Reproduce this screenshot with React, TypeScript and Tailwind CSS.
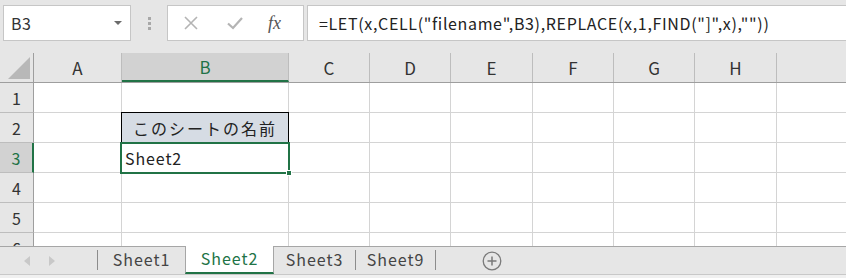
import React from "react";

const font = { fontFamily: '"Noto Sans CJK JP", "Noto Sans", sans-serif' };

const cols = [
  { l: "A", w: 88 },
  { l: "B", w: 167 },
  { l: "C", w: 81 },
  { l: "D", w: 81 },
  { l: "E", w: 82 },
  { l: "F", w: 81 },
  { l: "G", w: 81 },
  { l: "H", w: 82 },
  { l: "", w: 70 },
];

function Row({ n, h = 30 }: { n: string; h?: number }) {
  const sel = n === "3";
  return (
    <div className="flex shrink-0" style={{ height: h }}>
      <div
        className={
          "w-[34px] shrink-0 flex items-center justify-center text-[16px] border-b border-r " +
          (sel
            ? "bg-[#d2d2d2] text-[#217346] border-r-[#217346] border-r-2 border-b-[#bdbdbd]"
            : "bg-[#e6e6e6] text-[#333] border-b-[#bdbdbd] border-r-[#9e9e9e]")
        }
      >
        {n}
      </div>
      {cols.map((c, i) => {
        let content: React.ReactNode = null;
        let cls = "shrink-0 border-b border-r border-[#d4d4d4] bg-white";
        if (n === "2" && c.l === "B") {
          cls = "shrink-0 bg-[#d6dce4] border border-black -mt-px -ml-px flex items-center justify-center text-[16px] text-[#222] tracking-[2px]";
          content = "このシートの名前";
          return (
            <div key={i} className={cls} style={{ width: c.w + 1, height: h + 1 }}>
              {content}
            </div>
          );
        }
        if (n === "3" && c.l === "B") {
          content = <span className="pl-[3px] text-[16px] text-[#222] tracking-[0.9px]">Sheet2</span>;
          cls += " flex items-center";
        }
        return (
          <div key={i} className={cls} style={{ width: c.w }}>
            {content}
          </div>
        );
      })}
    </div>
  );
}

export default function App() {
  return (
    <div className="w-[846px] h-[278px] overflow-hidden bg-[#e6e6e6] flex flex-col relative" style={font}>
      {/* toolbar */}
      <div className="h-[53px] shrink-0 flex items-start pt-[5px] pl-[3px]">
        <div className="w-[128px] h-[36px] bg-white border border-[#c6c6c6] flex items-center justify-between pl-[7px] pr-[8px]">
          <span className="text-[16px] text-[#333] tracking-[0.5px]">B3</span>
          <svg width="8" height="5" viewBox="0 0 8 5"><path d="M0 0h8L4 4z" fill="#6b6b6b" /></svg>
        </div>
        <div className="w-[36px] h-[36px] flex flex-col items-center justify-center gap-[2px]">
          <div className="w-[3px] h-[3px] bg-[#a8a8a8]" />
          <div className="w-[3px] h-[3px] bg-[#a8a8a8]" />
          <div className="w-[3px] h-[3px] bg-[#a8a8a8]" />
        </div>
        <div className="w-[137px] h-[36px] bg-white border border-[#c6c6c6] flex items-center">
          <svg className="ml-[15px]" width="16" height="16" viewBox="0 0 16 16">
            <path d="M2 2L14 14M14 2L2 14" stroke="#b4b4b4" strokeWidth="1.6" />
          </svg>
          <svg className="ml-[27px]" width="18" height="16" viewBox="0 0 18 16">
            <path d="M2 8.5L7 13L16 3" stroke="#b4b4b4" strokeWidth="2.2" fill="none" />
          </svg>
          <span
            className="ml-[24px] text-[18px] italic text-[#555] leading-none"
            style={{ fontFamily: '"Liberation Serif", serif' }}
          >
            fx
          </span>
        </div>
        <div className="ml-[3px] flex-1 h-[36px] bg-white border border-[#c6c6c6] border-r-0 flex items-center pl-[11px]">
          <span className="text-[16px] text-[#222] whitespace-nowrap tracking-[0.65px]">=LET(x,CELL("filename",B3),REPLACE(x,1,FIND("]",x),""))</span>
        </div>
      </div>
      {/* column header */}
      <div className="h-[30px] shrink-0 flex border-b border-[#9e9e9e]">
        <div className="w-[34px] shrink-0 border-r border-[#9e9e9e] relative">
          <svg className="absolute right-[3px] bottom-[3px]" width="22" height="22" viewBox="0 0 22 22">
            <path d="M22 0V22H0z" fill="#b8b8b8" />
          </svg>
        </div>
        {cols.map((c, i) => (
          <div
            key={i}
            className={
              "shrink-0 flex items-center justify-center text-[17px] border-r border-[#bdbdbd] " +
              (c.l === "B" ? "bg-[#d2d2d2] text-[#217346] border-b-2 border-b-[#217346]" : "text-[#333]")
            }
            style={{ width: c.w }}
          >
            {c.l}
          </div>
        ))}
      </div>
      {/* rows */}
      <div className="flex-1 flex flex-col overflow-hidden relative">
        <Row n="1" />
        <Row n="2" />
        <Row n="3" />
        <Row n="4" />
        <Row n="5" />
        <Row n="6" />
        {/* selection */}
        <div className="absolute left-[120px] top-[59px] w-[170px] h-[32px] border-2 border-[#217346]" />
        <div className="absolute left-[286px] top-[87px] w-[6px] h-[6px] bg-[#217346] border border-white" />
      </div>
      {/* tab bar */}
      <div className="h-[28px] shrink-0 border-t border-[#a6a6a6] flex items-stretch">
        <div className="w-[97px] flex items-center gap-[19px] pl-[24px]">
          <svg width="6" height="10" viewBox="0 0 6 10"><path d="M6 0V10L0 5z" fill="#c8c8c8" /></svg>
          <svg width="6" height="10" viewBox="0 0 6 10"><path d="M0 0V10L6 5z" fill="#c8c8c8" /></svg>
        </div>
        <div className="w-px h-[20px] mt-[3px] bg-[#8c8c8c]" />
        <div className="w-[87px] flex items-start justify-center text-[16px] text-[#444] tracking-[1px]">Sheet1</div>
        <div className="w-[89px] -mt-px bg-white border-x border-[#a6a6a6] border-b-2 border-b-[#217346] flex items-start justify-center text-[16px] text-[#217346] tracking-[1px]">
          Sheet2
        </div>
        <div className="w-[81px] flex items-start justify-center text-[16px] text-[#444] tracking-[1px]">Sheet3</div>
        <div className="w-px h-[20px] mt-[3px] bg-[#8c8c8c]" />
        <div className="w-[79px] flex items-start justify-center text-[16px] text-[#444] tracking-[1px]">Sheet9</div>
        <div className="w-px h-[20px] mt-[3px] bg-[#8c8c8c]" />
        <div className="ml-[46px] flex items-center">
          <svg width="20" height="20" viewBox="0 0 20 20">
            <circle cx="10" cy="10" r="8.8" stroke="#7a7a7a" strokeWidth="1.3" fill="none" />
            <path d="M10 5.5V14.5M5.5 10H14.5" stroke="#7a7a7a" strokeWidth="1.5" />
          </svg>
        </div>
      </div>
      <div className="h-[4px] shrink-0 border-t border-[#c8c8c8] bg-[#f0f0f0]" />
    </div>
  );
}
